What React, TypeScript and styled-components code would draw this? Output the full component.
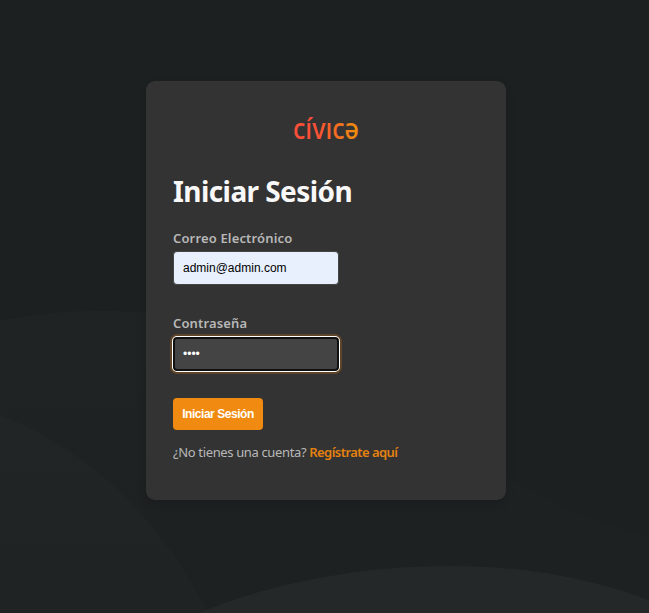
import React, { useState } from "react";
import styled, { createGlobalStyle } from "styled-components";

const GlobalStyle = createGlobalStyle`
  * { box-sizing: border-box; }
  body {
    margin: 0;
    overflow: hidden;
    background: #1c2020;
    font-family: "Noto Sans", sans-serif;
  }
`;

const Page = styled.main`
  position: relative;
  display: flex;
  justify-content: center;
  align-items: flex-start;
  height: 100vh;
  padding: 81px 0 0 3px;
`;

const Backdrop = styled.svg`
  position: absolute;
  inset: 0;
  z-index: -1;
`;

const Card = styled.section`
  width: 360px;
  height: 419px;
  padding: 24px 27px 0;
  border-radius: 9px;
  background: #333333;
  box-shadow: 0 4px 8px rgba(0, 0, 0, 0.12);
`;

const Logo = styled.svg`
  display: block;
  margin: 0 auto;
  overflow: visible;
`;

const Title = styled.h1`
  margin: 21px 0 0;
  height: 40px;
  line-height: 40px;
  font-size: 28px;
  font-weight: 700;
  letter-spacing: -0.58px;
  color: #f8f8f8;
  white-space: nowrap;
`;

const Form = styled.form`
  padding-top: 17px;
`;

const Field = styled.div`
  display: flex;
  flex-direction: column;
  align-items: flex-start;
  height: 85px;
`;

const Label = styled.label`
  height: 22px;
  line-height: 20px;
  margin-bottom: 1px;
  font-size: 13px;
  font-weight: 600;
  letter-spacing: 0.15px;
  color: #b8b8b8;
`;

const Input = styled.input<{ $variant: "filled" | "active" }>`
  width: 166px;
  height: 34px;
  border-radius: 4px;
  outline: none;
  font: 12px "Liberation Sans", Arial, sans-serif;
  ${({ $variant }) =>
    $variant === "filled"
      ? `
    padding: 0 9px;
    border: 1px solid #444444;
    background: #e8f0fe;
    color: #000000;
  `
      : `
    margin-top: 1px;
    padding: 0 8px;
    border: 2px solid #101010;
    background: #444444;
    color: #ffffff;
    box-shadow: 0 0 0 1px #ffffff, 0 0 0 3px #5f4527;
  `}
`;

const Submit = styled.button`
  display: block;
  width: 90px;
  height: 32px;
  padding: 0;
  border: 0;
  border-radius: 4px;
  background: #f18a10;
  color: #ffffff;
  font: 700 12px "Liberation Sans", Arial, sans-serif;
  letter-spacing: -0.45px;
`;

const Note = styled.p`
  margin: 12px 0 0;
  line-height: 20px;
  font-size: 13px;
  color: #b8b8b8;
  white-space: nowrap;
  letter-spacing: -0.36px;
`;

const RegisterLink = styled.a`
  color: #e5820f;
  font-weight: 600;
  letter-spacing: -0.55px;
  text-decoration: none;
`;

export default function App() {
  const [email, setEmail] = useState("admin@admin.com");
  const [password, setPassword] = useState("1234");

  return (
    <Page>
      <GlobalStyle />
      <Backdrop width="649" height="613" viewBox="0 0 649 613" aria-hidden="true">
        <defs>
          <linearGradient id="wave" x1="0" y1="311" x2="0" y2="540" gradientUnits="userSpaceOnUse">
            <stop offset="0" stopColor="#1f2323" />
            <stop offset="1" stopColor="#1d2121" />
          </linearGradient>
          <linearGradient id="mound" x1="0" y1="415" x2="0" y2="613" gradientUnits="userSpaceOnUse">
            <stop offset="0" stopColor="#212525" />
            <stop offset="1" stopColor="#1f2323" />
          </linearGradient>
        </defs>
        <path
          d="M0 321C35 314 68 311 100 311C280 311 360 380 480 460C540 500 590 522 649 537V613H0Z"
          fill="url(#wave)"
        />
        <path d="M0 415C90 450 160 520 208 613H0Z" fill="url(#mound)" />
        <path d="M198 613C280 580 365 566 450 566C525 566 590 578 649 600V613Z" fill="#242828" />
      </Backdrop>
      <Card>
        <Logo width="86" height="45" viewBox="0 0 86 45" role="img" aria-label="Cívica">
          <defs>
            <linearGradient id="brand" x1="10" y1="0" x2="76" y2="0" gradientUnits="userSpaceOnUse">
              <stop offset="0.35" stopColor="#fb4f37" />
              <stop offset="1" stopColor="#ec900c" />
            </linearGradient>
          </defs>
          <text
            x="10"
            y="34"
            fontFamily="Noto Sans"
            fontSize="29"
            fontWeight="500"
            textLength="66"
            lengthAdjust="spacingAndGlyphs"
            fill="url(#brand)"
          >
            cívıcə
          </text>
        </Logo>
        <Title>Iniciar Sesión</Title>
        <Form onSubmit={(e) => e.preventDefault()}>
          <Field>
            <Label htmlFor="email">Correo Electrónico</Label>
            <Input
              id="email"
              $variant="filled"
              value={email}
              onChange={(e) => setEmail(e.target.value)}
            />
          </Field>
          <Field>
            <Label htmlFor="password">Contraseña</Label>
            <Input
              id="password"
              type="password"
              $variant="active"
              value={password}
              onChange={(e) => setPassword(e.target.value)}
            />
          </Field>
          <Submit type="submit">Iniciar Sesión</Submit>
        </Form>
        <Note>
          ¿No tienes una cuenta? <RegisterLink href="#">Regístrate aquí</RegisterLink>
        </Note>
      </Card>
    </Page>
  );
}
